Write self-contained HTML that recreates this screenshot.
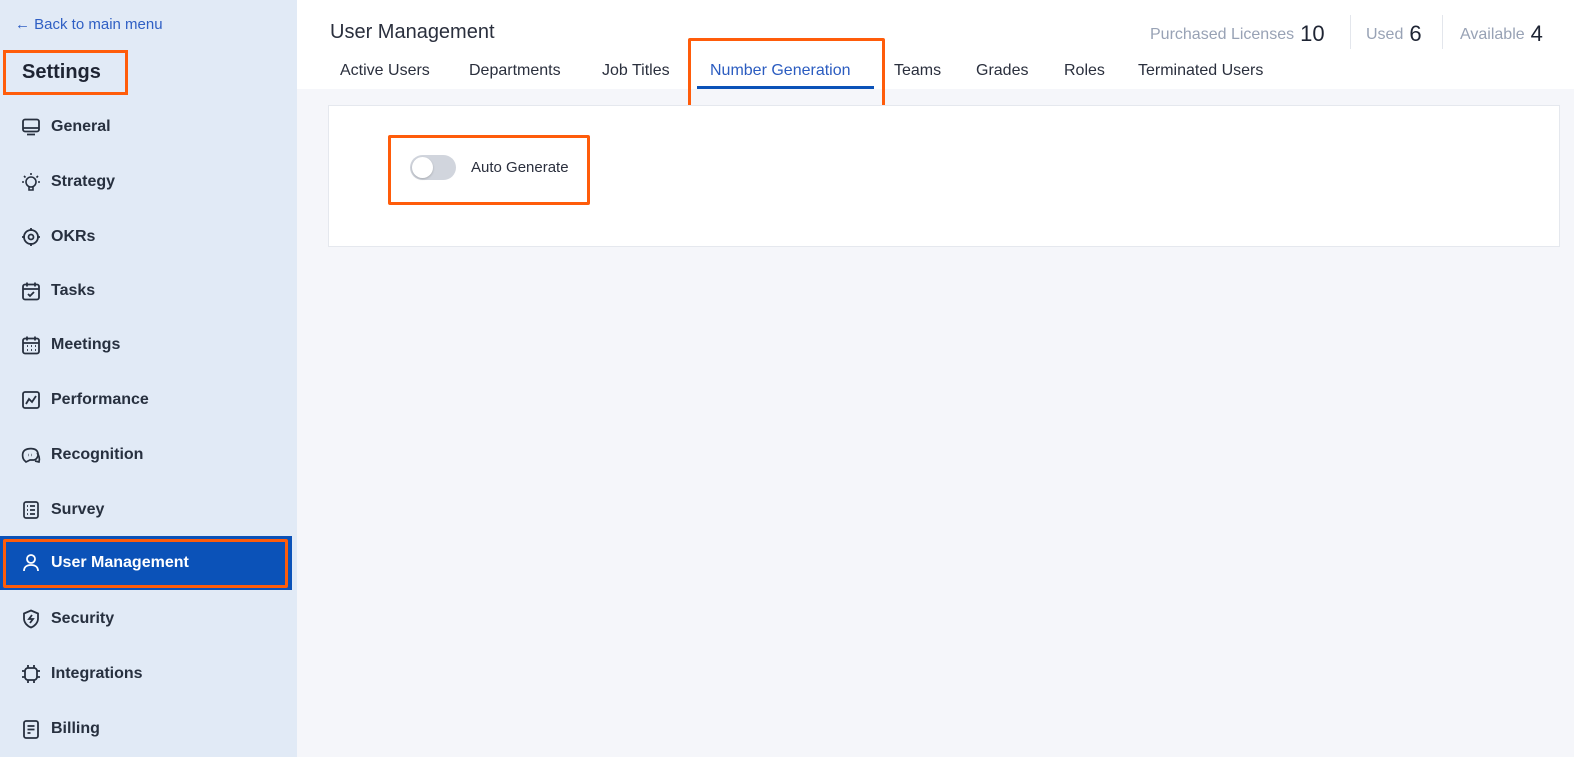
<!DOCTYPE html>
<html><head><style>
*{margin:0;padding:0;box-sizing:border-box}
body{width:1574px;height:757px;overflow:hidden;font-family:"Liberation Sans",sans-serif;background:#f5f6fa;position:relative;color:#1e2433}
.sb{position:absolute;left:0;top:0;width:297px;height:757px;background:#e1eaf6}
.back{position:absolute;left:15px;top:16px;font-size:15px;color:#2f5fc4}
.set{position:absolute;left:3px;top:50px;width:125px;height:45px;border:3px solid #ff5c0a;font-size:20px;font-weight:bold;padding:8px 0 0 16px;color:#1e2433}
.it{position:absolute;left:0;width:297px;height:54px;display:flex;align-items:center;font-size:16px;font-weight:bold;color:#27303f}
.it svg{position:absolute;left:21px;top:17px;width:20px;height:20px}
.it span{position:absolute;left:51px;top:18px}
.act{background:#0b52b8;color:#fff;width:292px}
.act:after{content:"";position:absolute;left:3px;top:3px;right:4px;bottom:2px;border:3px solid #ff5c0a;border-radius:2px}
.hd{position:absolute;left:297px;top:0;right:0;height:89px;background:#fff}
.title{position:absolute;left:330px;top:21px;font-size:20px;color:#2a2f3d}
.tab{position:absolute;top:62px;font-size:16px;color:#2a2f3d}
.lic{position:absolute;top:19px;font-size:16px;color:#98a2b5}
.lic b{font-weight:normal;font-size:22px;color:#1e2433;margin-left:6px;position:relative;top:2px}
.sep{position:absolute;top:15px;width:1px;height:34px;background:#e3e6ec}
.card{position:absolute;left:328px;top:105px;width:1232px;height:142px;background:#fff;border:1px solid #e5e8ee}
.ob{position:absolute;border:3px solid #ff5c0a;border-radius:2px}
</style></head><body>
<div class="sb">
<div class="back">← Back to main menu</div>
<div class="set">Settings</div>
<div class="it" style="top:100px"><svg viewBox="0 0 20 20" fill="none" stroke="#27303f" stroke-width="1.8"><rect x="2" y="2.5" width="16" height="12" rx="2"/><path d="M2 11h16M6 17.5h8"/></svg><span>General</span></div>
<div class="it" style="top:155px"><svg viewBox="0 0 20 20" fill="none" stroke="#27303f" stroke-width="1.6"><circle cx="10" cy="10" r="5"/><path d="M8 15v3h4v-3M10 1v2M3 4l1.5 1.5M17 4l-1.5 1.5M1 10h2M17 10h2"/></svg><span>Strategy</span></div>
<div class="it" style="top:210px"><svg viewBox="0 0 20 20" fill="none" stroke="#27303f" stroke-width="1.8"><circle cx="10" cy="10" r="7"/><circle cx="10" cy="10" r="2.5"/><path d="M10 1v3M10 16v3M1 10h3M16 10h3"/></svg><span>OKRs</span></div>
<div class="it" style="top:264px"><svg viewBox="0 0 20 20" fill="none" stroke="#27303f" stroke-width="1.8"><rect x="2" y="3.5" width="16" height="15" rx="2"/><path d="M2 8h16M6 1.5v4M14 1.5v4M7 13l2 2 4-4"/></svg><span>Tasks</span></div>
<div class="it" style="top:318px"><svg viewBox="0 0 20 20" fill="none" stroke="#27303f" stroke-width="1.8"><rect x="2" y="3.5" width="16" height="15" rx="2"/><path d="M2 8h16M6 1.5v4M14 1.5v4M6 11h1M10 11h1M14 11h1M6 15h1M10 15h1M14 15h1"/></svg><span>Meetings</span></div>
<div class="it" style="top:373px"><svg viewBox="0 0 20 20" fill="none" stroke="#27303f" stroke-width="1.8"><rect x="2" y="2" width="16" height="16" rx="2"/><path d="M5 14l3-5 3 3 4-6"/></svg><span>Performance</span></div>
<div class="it" style="top:428px"><svg viewBox="0 0 20 20" fill="none" stroke="#27303f" stroke-width="1.7"><path d="M3 15C1 12 1 7 4 5s10-2 12 1 1 8-3 9l-4 0-4 2z"/><path d="M16 8c2 2 3 6 2 9l-4-1"/><path d="M7 10h.5M10 10h.5" stroke-width="2.5"/></svg><span>Recognition</span></div>
<div class="it" style="top:483px"><svg viewBox="0 0 20 20" fill="none" stroke="#27303f" stroke-width="1.7"><rect x="3" y="2" width="14" height="16" rx="2"/><path d="M6 6h1M9 6h5M6 10h1M9 10h5M6 14h1M9 14h5"/></svg><span>Survey</span></div>
<div class="it act" style="top:536px"><svg viewBox="0 0 20 20" fill="none" stroke="#fff" stroke-width="1.8"><circle cx="10" cy="6" r="4"/><path d="M3 18c0-4 3-6 7-6s7 2 7 6"/></svg><span>User Management</span></div>
<div class="it" style="top:592px"><svg viewBox="0 0 20 20" fill="none" stroke="#27303f" stroke-width="1.8"><path d="M10 1.5l7 3v5c0 4-3 7.5-7 9-4-1.5-7-5-7-9v-5z"/><path d="M11 6l-3 4h4l-3 4"/></svg><span>Security</span></div>
<div class="it" style="top:647px"><svg viewBox="0 0 20 20" fill="none" stroke="#27303f" stroke-width="1.8"><rect x="4" y="4" width="12" height="12" rx="3"/><path d="M7 1v3M13 1v3M7 16v3M13 16v3M1 7h3M1 13h3M16 7h3M16 13h3"/></svg><span>Integrations</span></div>
<div class="it" style="top:702px"><svg viewBox="0 0 20 20" fill="none" stroke="#27303f" stroke-width="1.8"><rect x="3" y="2" width="14" height="17" rx="2"/><path d="M6.5 7h7M6.5 10.5h7M6.5 14h3"/></svg><span>Billing</span></div>
</div>
<div class="hd"></div>
<div class="title">User Management</div>
<div class="tab" style="left:340px">Active Users</div>
<div class="tab" style="left:469px">Departments</div>
<div class="tab" style="left:602px">Job Titles</div>
<div class="tab" style="left:710px;color:#2b5cc0">Number Generation</div>
<div class="tab" style="left:894px">Teams</div>
<div class="tab" style="left:976px">Grades</div>
<div class="tab" style="left:1064px">Roles</div>
<div class="tab" style="left:1138px">Terminated Users</div>
<div style="position:absolute;left:697px;top:86px;width:177px;height:3px;background:#0b52b8"></div>
<div class="ob" style="left:688px;top:38px;width:197px;height:70px"></div>
<div class="lic" style="left:1150px">Purchased Licenses<b>10</b></div>
<div class="sep" style="left:1350px"></div>
<div class="lic" style="left:1366px">Used<b>6</b></div>
<div class="sep" style="left:1442px"></div>
<div class="lic" style="left:1460px">Available<b>4</b></div>
<div class="card"></div>
<div style="position:absolute;left:410px;top:155px;width:46px;height:25px;border-radius:13px;background:#d1d5dd"></div>
<div style="position:absolute;left:412px;top:157px;width:21px;height:21px;border-radius:50%;background:#fff;box-shadow:0 1px 2px rgba(0,0,0,.2)"></div>
<div style="position:absolute;left:471px;top:159px;font-size:15px;color:#2a2f3d">Auto Generate</div>
<div class="ob" style="left:388px;top:135px;width:202px;height:70px"></div>
</body></html>
